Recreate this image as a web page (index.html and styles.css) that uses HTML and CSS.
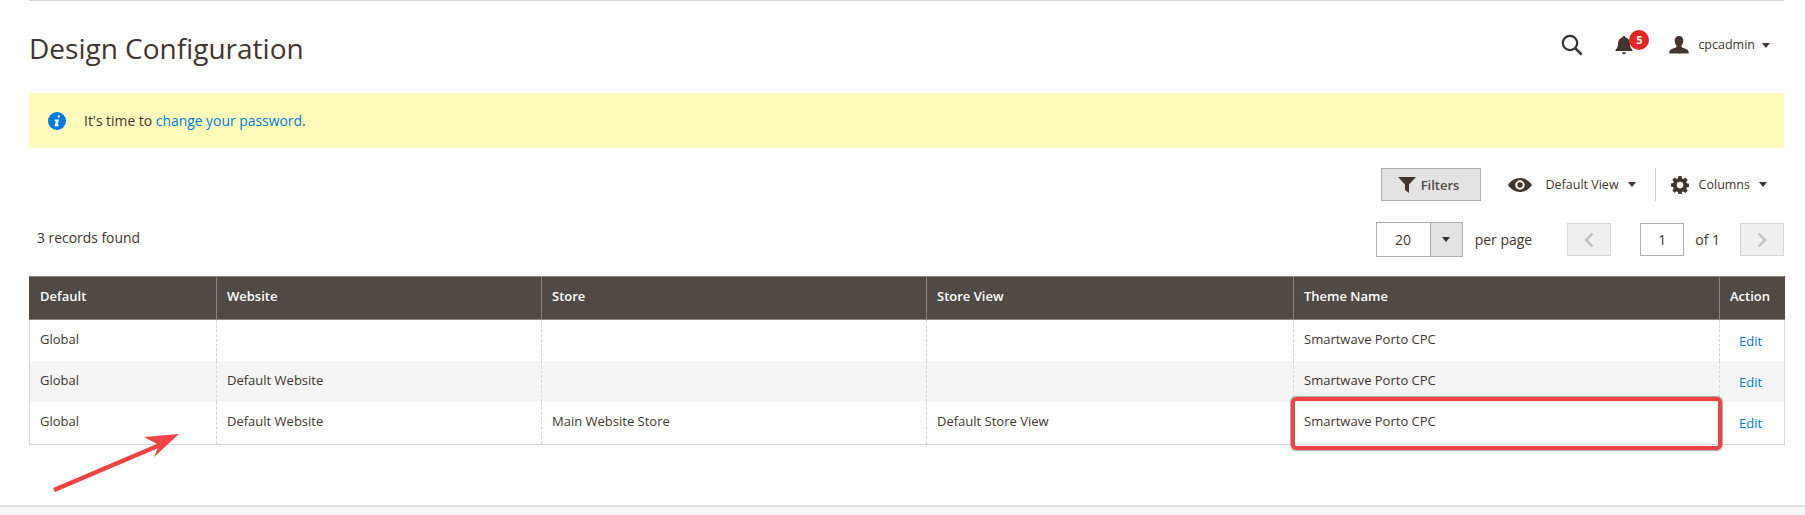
FILE: index.html
```html
<!DOCTYPE html>
<html lang="en">
<head>
    <meta charset="UTF-8">
    <title>Design Configuration</title>
    <link rel="stylesheet" href="styles.css">
</head>
<body>
    <div class="page">
        <header class="page-header">
            <h1>Design Configuration</h1>
            <div class="header-actions">
                <svg class="icon-search" viewBox="0 0 22 22" width="22" height="22">
                    <circle cx="9" cy="9" r="7.2" fill="none" stroke="#373330" stroke-width="2.2"/>
                    <path d="M14.2 14.2 L20.6 20.6" stroke="#373330" stroke-width="2.6" fill="none"/>
                </svg>
                <div class="notifications">
                    <svg viewBox="0 0 18 20" width="18" height="20">
                        <path d="M9 1c1 0 1.6.7 1.7 1.5C13.400 3.300 15 5.500 15 8.500c0 3.500 1 5 2.500 6.500v1H.5v-1C2 13.500 3 12 3 8.500c0-3 1.600-5.200 4.300-6C7.400 1.700 8 1 9 1zM7 17.200h4C11 18.400 10.100 19.200 9 19.200S7 18.400 7 17.200z" fill="#41362f"/>
                    </svg>
                    <span class="badge">5</span>
                </div>
                <div class="user">
                    <svg viewBox="0 0 20 20" width="20" height="20">
                        <path d="M10 1c3 0 4.300 2.200 4.300 4.800 0 2-.8 3.900-1.900 5 0 1 .3 1.500 1.300 2 2 .8 4.800 1.500 5.800 3.200l.3 2.500H.2l.3-2.500c1-1.700 3.800-2.400 5.800-3.200 1-.5 1.300-1 1.300-2-1.100-1.100-1.900-3-1.900-5C5.700 3.200 7 1 10 1z" fill="#41362f"/>
                    </svg>
                    <span class="user-name">cpcadmin</span>
                    <span class="caret"></span>
                </div>
            </div>
        </header>

        <div class="notice">
            <svg viewBox="0 0 18 18" width="18" height="18">
                <circle cx="9" cy="9" r="9" fill="#007bdb"/>
                <path d="M9.900 3.400h2.100l-.4 2H9.500zM7 7.400h3.900L9.700 12.700h1.100l-.3 1.500H6.600L7.800 8.900H6.700z" fill="#fff"/>
            </svg>
            <p>It's time to <a href="#">change your password</a>.</p>
        </div>

        <div class="toolbar">
            <button class="filters" type="button">
                <svg viewBox="0 0 18 16" width="18" height="16">
                    <path d="M0 0h18l-7 7.500V16l-4-3V7.500z" fill="#41362f"/>
                </svg>
                Filters
            </button>
            <div class="view">
                <svg viewBox="0 0 24 14" width="24" height="14">
                    <path fill-rule="evenodd" d="M12 0c5 0 9.500 3 12 7-2.500 4-7 7-12 7S2.500 11 0 7c2.500-4 7-7 12-7zm0 2.300a4.700 4.700 0 1 0 0 9.400 4.700 4.700 0 0 0 0-9.400zm0 2a2.700 2.700 0 1 1 0 5.400 2.700 2.700 0 0 1 0-5.400z" fill="#41362f"/>
                </svg>
                <span class="view-label">Default View</span>
                <span class="caret"></span>
            </div>
            <div class="columns">
                <svg viewBox="0 0 18 18" width="18" height="18">
                    <path fill-rule="evenodd" d="M7.400 0h3.200l.4 2.500 1.400.6 2-1.500 2.300 2.300-1.500 2 .6 1.400 2.200.4v3.200l-2.200.4-.6 1.400 1.500 2-2.300 2.300-2-1.500-1.400.6-.4 2.200H7.400L7 15.900l-1.400-.6-2 1.500-2.300-2.300 1.500-2-.6-1.400L0 10.700V7.500l2.200-.4.600-1.400-1.500-2 2.300-2.300 2 1.500L7 2.500zM9 5.800a3.300 3.300 0 1 0 0 6.600 3.300 3.300 0 0 0 0-6.600z" fill="#41362f"/>
                </svg>
                <span class="columns-label">Columns</span>
                <span class="caret"></span>
            </div>
        </div>

        <div class="pager-row">
            <div class="records">3 records found</div>
            <div class="pager">
                <div class="per-page">
                    <span class="per-page-value">20</span>
                    <span class="per-page-toggle"><span class="caret"></span></span>
                </div>
                <span class="per-page-label">per page</span>
                <span class="page-btn page-prev">
                    <svg viewBox="0 0 10 16" width="10" height="16"><path d="M8.500 1.500 2 8l6.500 6.500" fill="none" stroke="#bdbdbd" stroke-width="2.400"/></svg>
                </span>
                <span class="page-input">1</span>
                <span class="page-total">of 1</span>
                <span class="page-btn page-next">
                    <svg viewBox="0 0 10 16" width="10" height="16"><path d="M1.500 1.500 8 8l-6.500 6.500" fill="none" stroke="#bdbdbd" stroke-width="2.400"/></svg>
                </span>
            </div>
        </div>

        <div class="grid-wrap">
            <table class="grid">
                <colgroup>
                    <col class="col-default">
                    <col class="col-website">
                    <col class="col-store">
                    <col class="col-view">
                    <col class="col-theme">
                    <col class="col-action">
                </colgroup>
                <thead>
                    <tr>
                        <th>Default</th>
                        <th>Website</th>
                        <th>Store</th>
                        <th>Store View</th>
                        <th>Theme Name</th>
                        <th>Action</th>
                    </tr>
                </thead>
                <tbody>
                    <tr>
                        <td>Global</td>
                        <td></td>
                        <td></td>
                        <td></td>
                        <td>Smartwave Porto CPC</td>
                        <td class="action"><a href="#">Edit</a></td>
                    </tr>
                    <tr>
                        <td>Global</td>
                        <td>Default Website</td>
                        <td></td>
                        <td></td>
                        <td>Smartwave Porto CPC</td>
                        <td class="action"><a href="#">Edit</a></td>
                    </tr>
                    <tr class="row-last">
                        <td>Global</td>
                        <td>Default Website</td>
                        <td>Main Website Store</td>
                        <td>Default Store View</td>
                        <td>Smartwave Porto CPC</td>
                        <td class="action"><a href="#">Edit</a></td>
                    </tr>
                </tbody>
            </table>
            <!-- screenshot annotations -->
            <div class="mark-box"></div>
            <svg class="mark-arrow" viewBox="0 0 132 60" width="132" height="60">
                <path d="M2 58 L108 13" stroke="#ef4444" stroke-width="4.500" fill="none"/>
                <path d="M127 2 L92 5 L107 13 L102 25z" fill="#ef4444"/>
            </svg>
        </div>
    </div>
    <footer class="page-footer"></footer>
</body>
</html>
```

FILE: styles.css
```css
* {
    box-sizing: border-box;
}
html, body {
    margin: 0;
    height: 515px;
    overflow: hidden;
}
body {
    font-family: "Open Sans", Arial, sans-serif;
    font-size: 13px;
    color: #41362f;
    background-color: #fff;
    display: flex;
    flex-direction: column;
}
a {
    color: #007bdb;
    text-decoration: none;
}
.page {
    flex: 1;
    margin: 0 21px 0 29px;
    border-top: 1px solid #d6d6d6;
}
.caret {
    display: inline-block;
    width: 0;
    height: 0;
    border-left: 4.500px solid transparent;
    border-right: 4.500px solid transparent;
    border-top: 5px solid #41362f;
}
.page-header {
    display: flex;
    justify-content: space-between;
    align-items: center;
    height: 92px;
}
.page-header h1 {
    margin: 0;
    font-size: 28px;
    font-weight: 400;
    color: #41362f;
    position: relative;
    top: 1px;
}
.header-actions {
    display: flex;
    align-items: center;
    padding-right: 14px;
    position: relative;
    top: -2px;
}
.icon-search {
    margin-right: 32px;
}
.notifications {
    position: relative;
    display: flex;
    margin-right: 36px;
}
.badge {
    position: absolute;
    top: -5px;
    left: 14px;
    width: 20px;
    height: 20px;
    border-radius: 50%;
    background-color: #e22626;
    color: #fff;
    font-size: 11px;
    font-weight: 700;
    line-height: 20px;
    text-align: center;
}
.user {
    display: flex;
    align-items: center;
}
.user-name {
    margin: 0 7px 2px 9px;
    font-size: 12.5px;
    color: #41362f;
}
.notice {
    display: flex;
    align-items: center;
    height: 55px;
    padding-left: 19px;
    background-color: #fffbbb;
}
.notice p {
    margin: 0 0 0 18px;
    font-size: 13.9px;
}
.toolbar {
    display: flex;
    align-items: center;
    justify-content: flex-end;
    height: 33px;
    margin-top: 20px;
    padding-right: 17px;
}
.filters {
    display: flex;
    align-items: center;
    justify-content: center;
    gap: 5px;
    width: 100px;
    height: 33px;
    padding: 0 4px 0 0;
    background-color: #e3e3e3;
    border: 1px solid #adadad;
    color: #514943;
    font-family: inherit;
    font-size: 13px;
    font-weight: 600;
}
.view {
    display: flex;
    align-items: center;
    height: 33px;
    margin-left: 27px;
    padding-right: 19px;
    border-right: 1px solid #d1d1d1;
    font-size: 12.5px;
}
.view-label {
    margin: 0 9px 0 14px;
}
.columns {
    display: flex;
    align-items: center;
    margin-left: 15px;
    font-size: 12.5px;
}
.columns-label {
    margin: 0 9px 0 10px;
}
.pager-row {
    display: flex;
    justify-content: space-between;
    align-items: center;
    height: 37px;
    margin-top: 20px;
}
.records {
    padding-left: 8px;
    font-size: 13.9px;
    position: relative;
    top: -2px;
}
.pager {
    display: flex;
    align-items: center;
    font-size: 14px;
}
.per-page {
    display: flex;
    width: 87px;
    height: 35px;
    border: 1px solid #adadad;
}
.per-page-value {
    width: 53px;
    line-height: 33px;
    text-align: center;
}
.per-page-toggle {
    flex: 1;
    display: flex;
    align-items: center;
    justify-content: center;
    background-color: #e3e3e3;
    border-left: 1px solid #adadad;
}
.per-page-label {
    margin: 0 35px 0 12px;
}
.page-btn {
    display: flex;
    align-items: center;
    justify-content: center;
    width: 44px;
    height: 33px;
    background-color: #f0f0f0;
    border: 1px solid #d6d6d6;
}
.page-input {
    width: 44px;
    height: 33px;
    margin-left: 29px;
    border: 1px solid #adadad;
    line-height: 31px;
    text-align: center;
}
.page-total {
    margin: 0 20px 0 11px;
}
.grid-wrap {
    position: relative;
    margin-top: 18px;
}
.grid {
    width: 1755px;
    table-layout: fixed;
    border-collapse: collapse;
    border-left: 1px solid #d6d6d6;
    border-right: 1px solid #d6d6d6;
    border-bottom: 1px solid #d6d6d6;
}
.col-default { width: 187px; }
.col-website { width: 325px; }
.col-store { width: 385px; }
.col-view { width: 367px; }
.col-theme { width: 426px; }
.col-action { width: 65px; }
.grid th {
    height: 43px;
    padding: 0 10px 5px;
    background-color: #514943;
    border: 1px solid #8a837f;
    color: #fff;
    font-weight: 600;
    text-align: left;
}
.grid th:first-child {
    border-left-color: #514943;
}
.grid th:last-child {
    border-right-color: #514943;
}
.grid td {
    height: 41px;
    padding: 10px 10px 0;
    border-left: 1px dashed #d6d6d6;
    vertical-align: top;
}
.grid td:first-child {
    border-left: none;
}
.grid tbody tr:nth-child(even) td {
    background-color: #f5f5f5;
}
.grid .row-last td {
    height: 43px;
}
.grid td.action {
    padding: 12px 0 0 19px;
}
.mark-box {
    position: absolute;
    left: 1262px;
    top: 121px;
    width: 431px;
    height: 53px;
    border: 4px solid #ef4444;
    border-radius: 5px;
    box-shadow: 0 0 1px 1px #aaa;
}
.mark-arrow {
    position: absolute;
    left: 23px;
    top: 156px;
}
.page-footer {
    height: 10px;
    background-color: #f5f5f5;
    border-top: 2px solid #e3e3e3;
}
```
